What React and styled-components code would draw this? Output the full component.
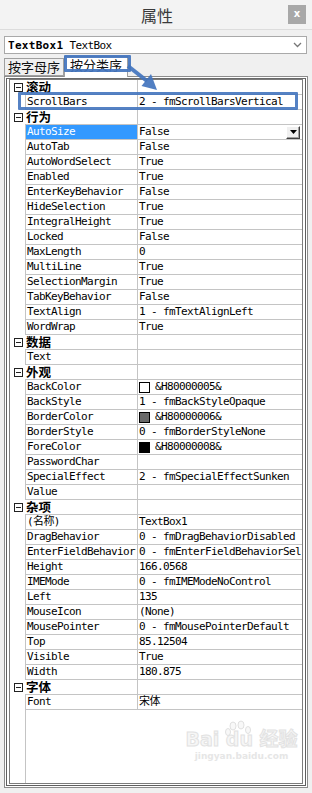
import React from 'react';
import styled, { createGlobalStyle } from 'styled-components';

const Global = createGlobalStyle`
  html, body { margin: 0; padding: 0; background: #f0f0f0; }
  #root { width: 312px; }
`;

const MONO = `"DejaVu Sans Mono", "Noto Sans CJK SC", monospace`;
const CJK = `"Noto Sans CJK SC", "Noto Sans", sans-serif`;

const Page = styled.div`
  position: relative;
  width: 312px;
  height: 793px;
  display: flex;
  flex-direction: column;
  background: #f0f0f0;
  overflow: hidden;
`;

const TitleBar = styled.div`
  height: 29px;
  border-bottom: 1px solid #dcdcdc;
  background: #f3f3f3;
  display: grid;
  grid-template-columns: 1fr auto 1fr;
  align-items: center;
`;

const Title = styled.div`
  font-family: ${CJK};
  font-size: 16px;
  line-height: 18px;
  color: #3a3a3a;
  margin-left: 2px;
`;

const CloseButton = styled.div`
  justify-self: end;
  margin-right: 6px;
  width: 18px;
  height: 19px;
  background: #a8a8a8;
  color: #fff;
  font-family: "DejaVu Sans", sans-serif;
  font-size: 10px;
  font-weight: bold;
  line-height: 18px;
  text-align: center;
`;

const ObjectCombo = styled.div`
  margin: 6px 5px 0 4px;
  height: 18px;
  box-sizing: border-box;
  border: 1px solid #a9a9a9;
  background: #fff;
  display: flex;
  align-items: center;
  padding-left: 3px;
  font-family: ${MONO};
  font-size: 11px;
  letter-spacing: -0.62px;
  color: #000;
  white-space: pre;
`;

const ComboBold = styled.span`
  font-weight: bold;
  letter-spacing: 0.3px;
  margin-right: 6px;
`;

const ComboChevron = styled.svg`
  margin-left: auto;
  margin-right: 4px;
`;

const TabStrip = styled.div`
  height: 22px;
  display: flex;
  align-items: flex-end;
  padding-left: 4px;
  position: relative;
  z-index: 2;
`;

const Tab = styled.div`
  position: relative;
  box-sizing: border-box;
  height: ${p => (p.$active ? '21px' : '18px')};
  width: ${p => (p.$active ? '64px' : '60px')};
  margin-bottom: ${p => (p.$active ? '-1px' : '0')};
  border: 1px solid #a0a0a0;
  border-bottom: ${p => (p.$active ? 'none' : '1px solid #a0a0a0')};
  background: ${p => (p.$active ? '#fff' : '#f0f0f0')};
  font-family: ${CJK};
  font-size: 13px;
  line-height: 16px;
  color: #111;
  text-align: center;
`;

const TabMark = styled.div`
  position: absolute;
  left: -1px;
  top: -2px;
  width: 67px;
  height: 17px;
  box-sizing: border-box;
  border: 3px solid rgba(66, 116, 190, 0.92);
  border-radius: 1px;
  pointer-events: none;
`;

const Frame = styled.div`
  flex: 1;
  margin: 0 4px 5px 4px;
  border: 1px solid #8c8c8c;
  padding: 1px;
  background: #fff;
  display: flex;
  min-height: 0;
`;

const FrameInner = styled.div`
  flex: 1;
  border: 1px solid #5f5f5f;
  border-top-color: #6a6a6a;
  padding: 0 2px 1px 2px;
  background: #fff;
  display: flex;
  min-height: 0;
`;

const Grid = styled.div`
  flex: 1;
  border: 1px solid #7c7c7c;
  background: #fff;
  display: flex;
  flex-direction: column;
  min-height: 0;
`;

const Row = styled.div`
  position: relative;
  height: 15px;
  display: grid;
  grid-template-columns: 15px 112px 1fr;
  flex-shrink: 0;
`;

const Gutter = styled.div`
  display: flex;
  align-items: center;
  padding-left: 4px;
`;

const NameCell = styled.div`
  box-sizing: border-box;
  border-bottom: 1px solid #c4c4c4;
  border-left: ${p => (p.$category ? 'none' : '1px solid #c4c4c4')};
  padding-left: 1px;
  background: ${p => (p.$selected ? '#3399ff' : '#fff')};
  color: ${p => (p.$selected ? '#fff' : '#000')};
  font-family: ${p => (p.$category ? CJK : MONO)};
  font-size: ${p => (p.$category ? '12.5px' : '11px')};
  font-weight: ${p => (p.$category ? 'bold' : 'normal')};
  letter-spacing: ${p => (p.$category ? '0' : '-0.62px')};
  line-height: 14px;
  white-space: pre;
  overflow: ${p => (p.$category ? 'visible' : 'hidden')};
`;

const ValueCell = styled.div`
  box-sizing: border-box;
  border-bottom: 1px solid #c4c4c4;
  border-left: 1px solid #c4c4c4;
  padding-left: 1px;
  display: flex;
  align-items: center;
  font-family: ${MONO};
  font-size: 11px;
  letter-spacing: -0.62px;
  line-height: 14px;
  color: #000;
  white-space: pre;
  overflow: hidden;
`;

const Swatch = styled.span`
  flex-shrink: 0;
  width: 11px;
  height: 11px;
  box-sizing: border-box;
  border: 1px solid #000;
  background: ${p => p.$color};
  margin-right: 5px;
`;

const DropButton = styled.div`
  margin-left: auto;
  margin-right: 2px;
  width: 14px;
  height: 13px;
  box-sizing: border-box;
  background: #f0f0f0;
  border-top: 1px solid #fff;
  border-left: 1px solid #fff;
  border-right: 1px solid #404040;
  border-bottom: 1px solid #404040;
  box-shadow: inset -1px -1px 0 #a0a0a0;
  display: flex;
  align-items: center;
  justify-content: center;
`;

const RowMark = styled.div`
  position: absolute;
  left: 8px;
  right: 4px;
  top: -3px;
  bottom: 0px;
  border: 3px solid rgba(66, 116, 190, 0.9);
  border-radius: 1px;
  pointer-events: none;
`;

const Filler = styled.div`
  position: relative;
  flex: 1;
  margin-left: 15px;
  border-left: 1px solid #c4c4c4;
`;

const Watermark = styled.div`
  position: absolute;
  left: 168px;
  top: 10px;
  width: 95px;
  display: flex;
  flex-direction: column;
  align-items: center;
  color: #f6f6f6;
  pointer-events: none;
`;

const WmMain = styled.div`
  font-family: "DejaVu Sans", ${CJK};
  font-weight: bold;
  font-size: 19px;
  line-height: 22px;
  -webkit-text-stroke: 1px #e2e2e2;
  white-space: nowrap;
`;

const WmSub = styled.div`
  font-family: "DejaVu Sans", sans-serif;
  font-weight: bold;
  font-size: 9px;
  line-height: 12px;
  color: #e6e6e6;
`;

const ArrowSvg = styled.svg`
  position: absolute;
  left: 0;
  top: 0;
  pointer-events: none;
  z-index: 5;
`;

const MinusBox = () => (
  <svg width="9" height="9" viewBox="0 0 9 9">
    <rect x="0.5" y="0.5" width="8" height="8" fill="#fff" stroke="#222" />
    <line x1="2" y1="4.5" x2="7" y2="4.5" stroke="#222" />
  </svg>
);

const groups = [
  { title: '滚动', items: [['ScrollBars', '2 - fmScrollBarsVertical', { mark: true }]] },
  {
    title: '行为',
    items: [
      ['AutoSize', 'False', { selected: true, dropdown: true }],
      ['AutoTab', 'False'],
      ['AutoWordSelect', 'True'],
      ['Enabled', 'True'],
      ['EnterKeyBehavior', 'False'],
      ['HideSelection', 'True'],
      ['IntegralHeight', 'True'],
      ['Locked', 'False'],
      ['MaxLength', '0'],
      ['MultiLine', 'True'],
      ['SelectionMargin', 'True'],
      ['TabKeyBehavior', 'False'],
      ['TextAlign', '1 - fmTextAlignLeft'],
      ['WordWrap', 'True'],
    ],
  },
  { title: '数据', items: [['Text', '']] },
  {
    title: '外观',
    items: [
      ['BackColor', '&H80000005&', { swatch: '#ffffff' }],
      ['BackStyle', '1 - fmBackStyleOpaque'],
      ['BorderColor', '&H80000006&', { swatch: '#696969' }],
      ['BorderStyle', '0 - fmBorderStyleNone'],
      ['ForeColor', '&H80000008&', { swatch: '#000000' }],
      ['PasswordChar', ''],
      ['SpecialEffect', '2 - fmSpecialEffectSunken'],
      ['Value', ''],
    ],
  },
  {
    title: '杂项',
    items: [
      ['(名称)', 'TextBox1'],
      ['DragBehavior', '0 - fmDragBehaviorDisabled'],
      ['EnterFieldBehavior', '0 - fmEnterFieldBehaviorSel'],
      ['Height', '166.0568'],
      ['IMEMode', '0 - fmIMEModeNoControl'],
      ['Left', '135'],
      ['MouseIcon', '(None)'],
      ['MousePointer', '0 - fmMousePointerDefault'],
      ['Top', '85.12504'],
      ['Visible', 'True'],
      ['Width', '180.875'],
    ],
  },
  { title: '字体', items: [['Font', '宋体']] },
];

export default function App() {
  return (
    <>
      <Global />
      <Page>
        <TitleBar>
          <span />
          <Title>属性</Title>
          <CloseButton>x</CloseButton>
        </TitleBar>
        <ObjectCombo>
          <ComboBold>TextBox1</ComboBold>TextBox
          <ComboChevron width="9" height="6" viewBox="0 0 9 6">
            <polyline points="1,1 4.5,4.5 8,1" fill="none" stroke="#777" strokeWidth="1.3" />
          </ComboChevron>
        </ObjectCombo>
        <TabStrip>
          <Tab>按字母序</Tab>
          <Tab $active>
            按分类序
            <TabMark />
          </Tab>
        </TabStrip>
        <Frame>
          <FrameInner>
            <Grid>
              {groups.map(g => (
                <React.Fragment key={g.title}>
                  <Row>
                    <Gutter>
                      <MinusBox />
                    </Gutter>
                    <NameCell $category>{g.title}</NameCell>
                    <ValueCell />
                  </Row>
                  {g.items.map(([name, value, opt = {}]) => (
                    <Row key={name}>
                      <Gutter />
                      <NameCell $selected={opt.selected}>{name}</NameCell>
                      <ValueCell>
                        {opt.swatch && <Swatch $color={opt.swatch} />}
                        {value}
                        {opt.dropdown && (
                          <DropButton>
                            <svg width="7" height="4" viewBox="0 0 7 4">
                              <polygon points="0,0 7,0 3.5,4" fill="#000" />
                            </svg>
                          </DropButton>
                        )}
                      </ValueCell>
                      {opt.mark && <RowMark />}
                    </Row>
                  ))}
                </React.Fragment>
              ))}
              <Filler>
                <Watermark>
                  <svg width="30" height="22" viewBox="0 0 30 22" style={{ marginBottom: -14, marginLeft: -6 }}>
                    <g fill="#f8f8f8" stroke="#e0e0e0" strokeWidth="1">
                      <ellipse cx="9" cy="6" rx="3" ry="4" />
                      <ellipse cx="17" cy="5" rx="3" ry="4" />
                      <ellipse cx="24" cy="10" rx="2.5" ry="3.5" />
                      <ellipse cx="4" cy="12" rx="2.5" ry="3.5" />
                    </g>
                  </svg>
                  <WmMain>Bai du 经验</WmMain>
                  <WmSub>jingyan.baidu.com</WmSub>
                </Watermark>
              </Filler>
            </Grid>
          </FrameInner>
        </Frame>
        <ArrowSvg width="312" height="120" viewBox="0 0 312 120">
          <line x1="128" y1="66" x2="147" y2="81" stroke="rgba(66,116,190,0.92)" strokeWidth="4" />
          <polygon points="157,90 141.5,86 151,74" fill="rgba(66,116,190,0.92)" />
        </ArrowSvg>
      </Page>
    </>
  );
}
